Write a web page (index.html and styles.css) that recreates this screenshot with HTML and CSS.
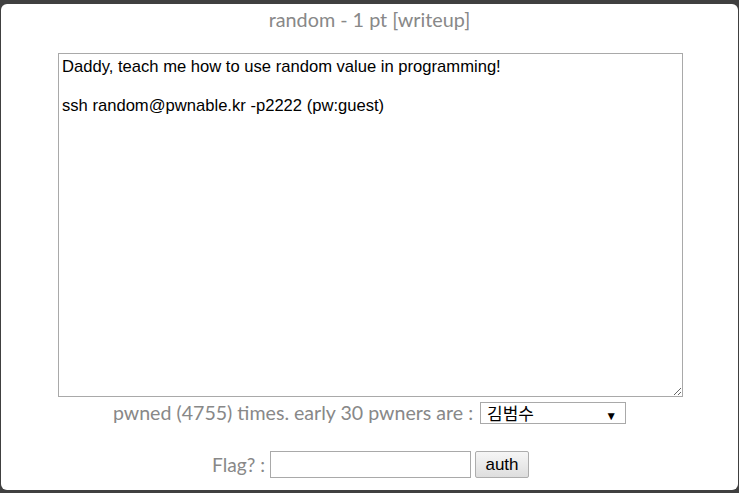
FILE: index.html
```html
<!DOCTYPE html>
<html>
<head>
    <title>random - 1 pt</title>
    <link rel="stylesheet" href="styles.css">
</head>
<body>

    <!-- Ventana del reto -->
    <div class="modal">
        <div class="modal_title">random - 1 pt [writeup]</div>

        <textarea class="chall_desc" readonly>Daddy, teach me how to use random value in programming!

ssh random@pwnable.kr -p2222 (pw:guest)</textarea>

        <div class="pwners_line">
            pwned (4755) times. early 30 pwners are :
            <span class="select_wrap">
                <select class="pwners_select">
                    <option>김범수</option>
                </select>
            </span>
        </div>

        <!-- Formulario de flag -->
        <form class="flag_form">
            <span class="flag_label">Flag? :</span>
            <input type="text" class="flag_input">
            <button type="button" class="auth_btn">auth</button>
        </form>
    </div>

</body>
</html>
```

FILE: styles.css
```css
       body {
           margin: 0;
           background-color: #404040;
           font-family: Lato, "Open Sans", sans-serif;
           overflow: hidden;
       }

       /* Ventana blanca */
       .modal {
           margin: 4px 1px 0 1px;
           height: 486px;
           background-color: #fff;
           border-radius: 6px;
           text-align: center;
       }

       .modal_title {
           padding-top: 3px;
           font-size: 19.8px;
           color: #888;
           line-height: 24px;
       }

       .chall_desc {
           display: block;
           margin: 22px 0 0 57px;
           width: 625px;
           height: 344px;
           box-sizing: border-box;
           padding: 3px 3px;
           border: 1px solid #a9a9a9;
           font-family: Arial, "Liberation Sans", sans-serif;
           font-size: 16.6px;
           line-height: 19.5px;
           color: #000;
           resize: both;
           outline: none;
       }

       .pwners_line {
           margin-top: 5px;
           font-size: 19.6px;
           color: #888;
           line-height: 22px;
       }

       .select_wrap {
           position: relative;
           display: inline-block;
           vertical-align: top;
           margin-left: 2px;
       }

       .pwners_select {
           -webkit-appearance: none;
           appearance: none;
           width: 146px;
           height: 22px;
           padding: 0 0 0 6px;
           border: 1px solid #a9a9a9;
           border-radius: 0;
           background-color: #fff;
           font-family: "Noto Sans CJK KR", sans-serif;
           font-size: 17px;
           line-height: 20px;
           color: #000;
       }

       .select_wrap::after {
           content: "\25BC";
           position: absolute;
           right: 9px;
           top: 3px;
           font-size: 12px;
           color: #000;
           pointer-events: none;
       }

       .flag_form {
           margin: 27px 0 0 2px;
           display: flex;
           justify-content: center;
           align-items: center;
           gap: 4px;
       }

       .flag_label {
           font-size: 19.2px;
           color: #888;
           margin-right: 1px;
       }

       .flag_input {
           width: 201px;
           height: 27px;
           box-sizing: border-box;
           border: 1px solid #a9a9a9;
           padding: 2px;
       }

       .auth_btn {
           width: 54px;
           height: 27px;
           box-sizing: border-box;
           border: 1px solid #adadad;
           border-radius: 2px;
           background: linear-gradient(#f6f6f6, #dedede);
           font-family: Arial, "Liberation Sans", sans-serif;
           font-size: 17px;
           color: #000;
           padding: 0;
       }
```
